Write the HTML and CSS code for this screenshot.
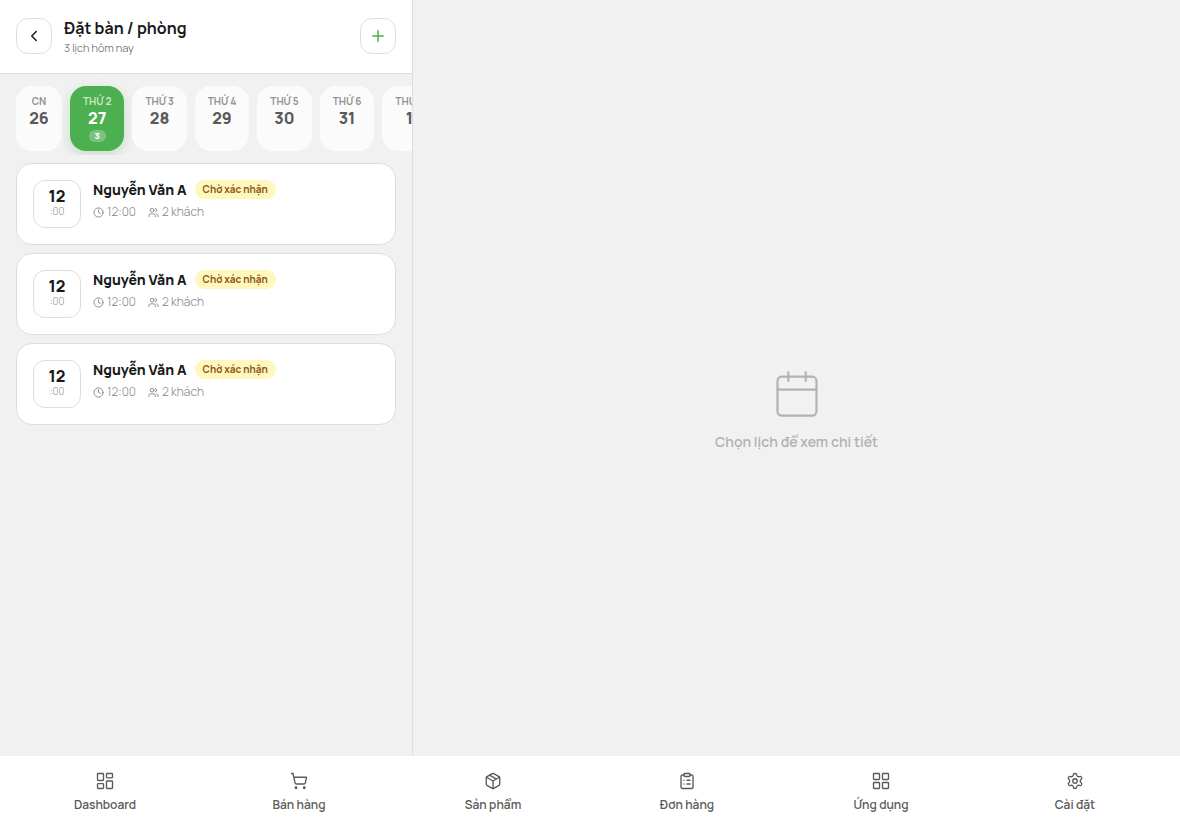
FILE: index.html
```html
<!DOCTYPE html>
<html lang="vi">
<head>
  <meta charset="UTF-8">
  <meta name="viewport" content="width=device-width, initial-scale=1">
  <title>Đặt bàn / phòng</title>
  <link rel="stylesheet" href="styles.css">
</head>
<body>
  <!-- shared icons for the booking cards -->
  <svg class="sprite" aria-hidden="true">
    <symbol id="clock" viewBox="0 0 24 24">
      <circle cx="12" cy="12" r="10"/>
      <path d="M12 6v6l4 2"/>
    </symbol>
    <symbol id="users" viewBox="0 0 24 24">
      <path d="M16 21v-2a4 4 0 0 0-4-4H6a4 4 0 0 0-4 4v2"/>
      <circle cx="9" cy="7" r="4"/>
      <path d="M22 21v-2a4 4 0 0 0-3-3.870M16 3.130a4 4 0 0 1 0 7.750"/>
    </symbol>
  </svg>

  <div class="layout">
    <section class="sidebar">
      <header class="header">
        <button class="icon-btn" type="button" aria-label="Quay lại">
          <svg class="icon" width="18" height="18" viewBox="0 0 24 24"><path d="m15 18-6-6 6-6"/></svg>
        </button>
        <div class="header-text">
          <h1>Đặt bàn / phòng</h1>
          <p>3 lịch hôm nay</p>
        </div>
        <button class="icon-btn add" type="button" aria-label="Thêm lịch">
          <svg class="icon" width="18" height="18" viewBox="0 0 24 24"><path d="M5 12h14M12 5v14"/></svg>
        </button>
      </header>

      <div class="days">
        <button class="day" type="button"><span class="day-name">CN</span><span class="day-num">26</span></button>
        <button class="day active" type="button"><span class="day-name">THỨ 2</span><span class="day-num">27</span><span class="day-count">3</span></button>
        <button class="day" type="button"><span class="day-name">THỨ 3</span><span class="day-num">28</span></button>
        <button class="day" type="button"><span class="day-name">THỨ 4</span><span class="day-num">29</span></button>
        <button class="day" type="button"><span class="day-name">THỨ 5</span><span class="day-num">30</span></button>
        <button class="day" type="button"><span class="day-name">THỨ 6</span><span class="day-num">31</span></button>
        <button class="day" type="button"><span class="day-name">THỨ 7</span><span class="day-num">1</span></button>
      </div>

      <div class="bookings">
        <button class="booking" type="button">
          <span class="time-box"><span class="hour">12</span><span class="minute">:00</span></span>
          <span class="info">
            <span class="name-row"><span class="name">Nguyễn Văn A</span><span class="badge">Chờ xác nhận</span></span>
            <span class="meta">
              <span class="meta-item"><svg class="icon" width="11" height="11"><use href="#clock"/></svg>12:00</span>
              <span class="meta-item"><svg class="icon" width="11" height="11"><use href="#users"/></svg>2 khách</span>
            </span>
          </span>
        </button>
        <button class="booking" type="button">
          <span class="time-box"><span class="hour">12</span><span class="minute">:00</span></span>
          <span class="info">
            <span class="name-row"><span class="name">Nguyễn Văn A</span><span class="badge">Chờ xác nhận</span></span>
            <span class="meta">
              <span class="meta-item"><svg class="icon" width="11" height="11"><use href="#clock"/></svg>12:00</span>
              <span class="meta-item"><svg class="icon" width="11" height="11"><use href="#users"/></svg>2 khách</span>
            </span>
          </span>
        </button>
        <button class="booking" type="button">
          <span class="time-box"><span class="hour">12</span><span class="minute">:00</span></span>
          <span class="info">
            <span class="name-row"><span class="name">Nguyễn Văn A</span><span class="badge">Chờ xác nhận</span></span>
            <span class="meta">
              <span class="meta-item"><svg class="icon" width="11" height="11"><use href="#clock"/></svg>12:00</span>
              <span class="meta-item"><svg class="icon" width="11" height="11"><use href="#users"/></svg>2 khách</span>
            </span>
          </span>
        </button>
      </div>
    </section>

    <main class="detail">
      <svg class="icon" width="52" height="52" viewBox="0 0 24 24">
        <rect x="3" y="4" width="18" height="18" rx="2"/>
        <path d="M8 2v4M16 2v4M3 10h18"/>
      </svg>
      <p>Chọn lịch để xem chi tiết</p>
    </main>
  </div>

  <nav class="tabbar">
    <a href="#dashboard">
      <svg class="icon" width="18" height="18" viewBox="0 0 24 24"><rect x="2" y="2" width="8" height="9.300" rx="1"/><rect x="14" y="2" width="8" height="5.800" rx="1"/><rect x="14" y="12" width="8" height="10" rx="1"/><rect x="2" y="15.500" width="8" height="6.500" rx="1"/></svg>
      <span>Dashboard</span>
    </a>
    <a href="#ban-hang">
      <svg class="icon" width="18" height="18" viewBox="0 0 24 24"><circle cx="8" cy="21" r="1"/><circle cx="19" cy="21" r="1"/><path d="M2.050 2.050h2l2.660 12.420a2 2 0 0 0 2 1.580h9.780a2 2 0 0 0 1.950-1.570l1.650-7.430H5.120"/></svg>
      <span>Bán hàng</span>
    </a>
    <a href="#san-pham">
      <svg class="icon" width="18" height="18" viewBox="0 0 24 24"><path d="M11 21.730a2 2 0 0 0 2 0l7-4A2 2 0 0 0 21 16V8a2 2 0 0 0-1-1.730l-7-4a2 2 0 0 0-2 0l-7 4A2 2 0 0 0 3 8v8a2 2 0 0 0 1 1.730z"/><path d="M12 22V12M3.300 7 12 12l8.700-5M7.500 4.270l9 5.150"/></svg>
      <span>Sản phẩm</span>
    </a>
    <a href="#don-hang">
      <svg class="icon" width="18" height="18" viewBox="0 0 24 24"><rect x="8" y="2" width="8" height="4" rx="1"/><path d="M16 4h2a2 2 0 0 1 2 2v14a2 2 0 0 1-2 2H6a2 2 0 0 1-2-2V6a2 2 0 0 1 2-2h2M12 11h4M12 16h4M8 11h.01M8 16h.01"/></svg>
      <span>Đơn hàng</span>
    </a>
    <a href="#ung-dung">
      <svg class="icon" width="18" height="18" viewBox="0 0 24 24"><rect x="2" y="2" width="8" height="8" rx="1"/><rect x="14" y="2" width="8" height="8" rx="1"/><rect x="14" y="14" width="8" height="8" rx="1"/><rect x="2" y="14" width="8" height="8" rx="1"/></svg>
      <span>Ứng dụng</span>
    </a>
    <a href="#cai-dat">
      <svg class="icon" width="18" height="18" viewBox="0 0 24 24"><path d="M9.671 4.136a2.340 2.340 0 0 1 4.659 0 2.340 2.340 0 0 0 3.319 1.915 2.340 2.340 0 0 1 2.330 4.033 2.340 2.340 0 0 0 0 3.831 2.340 2.340 0 0 1-2.330 4.033 2.340 2.340 0 0 0-3.319 1.915 2.340 2.340 0 0 1-4.659 0 2.340 2.340 0 0 0-3.320-1.915 2.340 2.340 0 0 1-2.330-4.033 2.340 2.340 0 0 0 0-3.831A2.340 2.340 0 0 1 6.350 6.051a2.340 2.340 0 0 0 3.319-1.915"/><circle cx="12" cy="12" r="3"/></svg>
      <span>Cài đặt</span>
    </a>
  </nav>
</body>
</html>
```
FILE: styles.css
```css
* {
  box-sizing: border-box;
}

body {
  margin: 0;
  height: 100vh;
  display: flex;
  flex-direction: column;
  background: #f1f1f1;
  color: #1a1a1a;
  font-family: Manrope, Inter, "Noto Sans", sans-serif;
}

h1, p {
  margin: 0;
}

button {
  font-family: inherit;
  color: inherit;
  cursor: pointer;
}

.sprite {
  display: none;
}

.icon {
  flex: none;
  fill: none;
  stroke: currentColor;
  stroke-width: 2;
  stroke-linecap: round;
  stroke-linejoin: round;
}

.layout {
  flex: 1;
  min-height: 0;
  display: flex;
}

.sidebar {
  width: 35%;
  display: flex;
  flex-direction: column;
  border-right: 1px solid #dedede;
}

/* HEADER */
.header {
  display: flex;
  align-items: center;
  gap: 12px;
  padding: 16px 16px 17px;
  background: #fff;
  border-bottom: 1px solid #dedede;
}

.header-text {
  flex: 1;
}

.header h1 {
  font-size: 16px;
  line-height: 24px;
  font-weight: 700;
}

.header p {
  font-size: 11px;
  line-height: 16px;
  font-weight: 300;
  color: #5a5a5a;
}

.icon-btn {
  width: 36px;
  height: 36px;
  display: flex;
  align-items: center;
  justify-content: center;
  padding: 0;
  background: #fff;
  border: 1px solid #dedede;
  border-radius: 12px;
}

.icon-btn.add {
  color: #4caf50;
}

/* DAY STRIP */
.days {
  flex: none;
  display: flex;
  gap: 8px;
  padding: 12px 16px 4px;
  overflow-x: auto;
  scrollbar-width: none;
}

.day {
  flex: none;
  min-width: 46px;
  height: 65px;
  display: flex;
  flex-direction: column;
  align-items: center;
  padding: 8px 13px;
  background: #fbfbfb;
  border: 0;
  border-radius: 16px;
  color: #5a5a5a;
}

.day-name {
  font-size: 10px;
  line-height: 15px;
  font-weight: 700;
  color: #929292;
}

.day-num {
  font-size: 16px;
  line-height: 18px;
  font-weight: 800;
}

.day-count {
  margin-top: 3px;
  padding: 0 6px;
  border-radius: 6px;
  background: rgba(255, 255, 255, 0.25);
  font-size: 9px;
  line-height: 12px;
  font-weight: 800;
}

.day.active {
  background: #4caf50;
  color: #fff;
  box-shadow: 0 4px 12px rgba(76, 175, 80, 0.25);
}

.day.active .day-name {
  color: #c9e7ca;
}

/* BOOKINGS */
.bookings {
  flex: 1;
  display: flex;
  flex-direction: column;
  gap: 8px;
  padding: 8px 16px;
  overflow-y: auto;
}

.booking {
  display: flex;
  align-items: flex-start;
  gap: 12px;
  padding: 16px;
  background: #fff;
  border: 1px solid #dedede;
  border-radius: 16px;
  text-align: left;
}

.time-box {
  width: 48px;
  height: 48px;
  display: flex;
  flex-direction: column;
  align-items: center;
  padding-top: 7px;
  border: 1px solid #dedede;
  border-radius: 12px;
}

.hour {
  font-size: 16px;
  line-height: 17px;
  font-weight: 800;
}

.minute {
  font-size: 10px;
  line-height: 13px;
  font-weight: 300;
  color: #929292;
}

.info {
  display: flex;
  flex-direction: column;
  gap: 4px;
}

.name-row {
  display: flex;
  align-items: flex-start;
  gap: 8px;
}

.name {
  font-size: 14px;
  line-height: 20px;
  font-weight: 800;
}

.badge {
  padding: 2px 8px;
  border-radius: 10px;
  background: #fef7be;
  color: #8f5510;
  font-size: 10px;
  line-height: 15px;
  font-weight: 700;
}

.meta {
  display: flex;
  gap: 12px;
  font-size: 12px;
  line-height: 16px;
  font-weight: 300;
  color: #858585;
}

.meta-item {
  display: flex;
  align-items: center;
  gap: 3px;
}

/* EMPTY DETAIL */
.detail {
  flex: 1;
  display: flex;
  flex-direction: column;
  align-items: center;
  justify-content: center;
  gap: 12px;
  padding-top: 64px;
  color: #b2b2b2;
}

.detail .icon {
  stroke-width: 1;
}

.detail p {
  font-size: 14px;
  line-height: 20px;
  font-weight: 600;
}

/* BOTTOM TABS */
.tabbar {
  display: flex;
  height: 64px;
  padding: 0 8px;
  background: #fff;
}

.tabbar a {
  flex: 1;
  display: flex;
  flex-direction: column;
  align-items: center;
  justify-content: center;
  gap: 6px;
  padding-top: 10px;
  color: #5a5a5a;
  text-decoration: none;
  font-size: 12px;
  line-height: 18px;
  font-weight: 600;
}

.tabbar .icon {
  stroke-width: 1.8;
}
```
